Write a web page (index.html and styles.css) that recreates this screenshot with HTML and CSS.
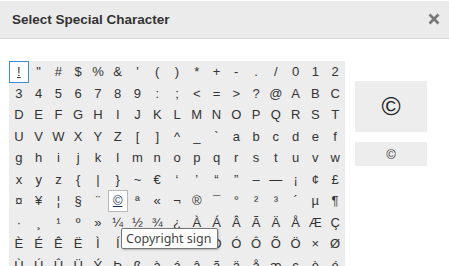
FILE: index.html
```html
<!DOCTYPE html>
<html lang="en">
<head>
  <meta charset="UTF-8">
  <title>Select Special Character</title>
  <link rel="stylesheet" href="styles.css">
</head>
<body>
  <div class="dialog">
    <div class="dialog-title">
      <span>Select Special Character</span>
      <a class="dialog-close" title="Close">
        <svg width="12" height="12" viewBox="0 0 12 12"><path d="M1.5 1.5 L10.5 10.5 M10.5 1.5 L1.5 10.5" stroke="#777" stroke-width="2.6" fill="none"/></svg>
      </a>
    </div>

    <div class="dialog-body">
      <div class="char-table" id="char-table"></div>

      <div class="preview">
        <div class="preview-big" id="preview-big">&copy;</div>
        <div class="preview-code" id="preview-code">&copy;</div>
      </div>
    </div>

    <div class="tooltip">Copyright sign</div>
  </div>

  <script>
    const chars = '!"#$%&\'()*+-./0123456789:;<=>?@ABCDEFGHIJKLMNOPQRSTUVWXYZ[]^_`abcdefghijklmnopqrstuvwxyz{|}~€‘’“”–—¡¢£¤¥¦§¨©ª«¬®¯°²³´µ¶·¸¹º»¼½¾¿ÀÁÂÃÄÅÆÇÈÉÊËÌÍÎÏÐÑÒÓÔÕÖ×ØÙÚÛÜÝÞßàáâãäåæçèé';

    const table = document.getElementById('char-table');
    Array.from(chars).forEach((ch, i) => {
        const a = document.createElement('a');
        a.className = 'char';
        a.textContent = ch;
        if (i === 0) a.classList.add('is-focused');
        if (ch === '©') {
            a.classList.add('is-hover');
            a.title = 'Copyright sign';
        }
        table.appendChild(a);
    });
  </script>
</body>
</html>
```

FILE: styles.css
```css
html, body {
  margin: 0;
  padding: 0;
  background: #fff;
  overflow: hidden;
}
body {
  font-family: "Liberation Sans", Arial, sans-serif;
  color: #333;
}
.dialog {
  position: relative;
  width: 449px;
  height: 266px;
  overflow: hidden;
}
.dialog-title {
  display: flex;
  align-items: center;
  justify-content: space-between;
  height: 37px;
  margin-top: 1px;
  padding: 0 9px 0 12px;
  background: #ebebeb;
  border-bottom: 1px solid #d6d6d6;
  font-size: 13.5px;
  font-weight: bold;
  color: #333;
}
.dialog-close {
  display: flex;
  padding-bottom: 1px;
}
.dialog-body {
  display: flex;
  align-items: flex-start;
  gap: 10px;
  padding: 22px 0 0 9px;
}
.char-table {
  display: grid;
  grid-template-columns: repeat(17, 1fr);
  grid-auto-rows: 21.5px;
  width: 336px;
  background: #ededed;
  flex-shrink: 0;
}
.char {
  display: flex;
  align-items: center;
  justify-content: center;
  box-sizing: border-box;
  border: 1px solid transparent;
  font-size: 13px;
  color: #333;
  text-decoration: none;
}
.char.is-focused {
  border-color: #3e8ddb;
  background: #fff;
  text-decoration: underline;
}
.char.is-hover {
  border-color: #b8b8b8;
  background: #fff;
  text-decoration: underline;
  color: #1a2f5a;
}
.preview {
  display: flex;
  flex-direction: column;
  gap: 10px;
  margin-top: 20px;
  width: 72px;
}
.preview-big {
  display: flex;
  align-items: center;
  justify-content: center;
  height: 51px;
  background: #ededed;
  font-size: 26px;
  color: #222;
}
.preview-code {
  display: flex;
  align-items: center;
  justify-content: center;
  height: 24px;
  background: #ededed;
  font-size: 13px;
}
.tooltip {
  position: absolute;
  left: 121px;
  top: 228px;
  width: 97px;
  height: 21px;
  box-sizing: border-box;
  padding: 1px 0 0 4px;
  background: #fff;
  border: 1px solid #767676;
  border-radius: 2px;
  box-shadow: 1px 1px 2px rgba(0, 0, 0, 0.25);
  font-family: "Noto Sans", "Open Sans", sans-serif;
  font-size: 12.5px;
  line-height: 17px;
  color: #444;
  white-space: nowrap;
}
```
